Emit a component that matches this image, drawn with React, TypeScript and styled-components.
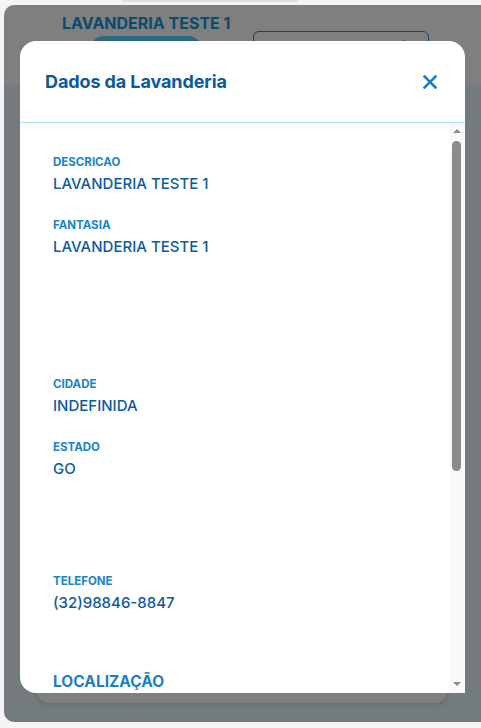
import React, { useEffect, useRef, useState } from "react";
import styled, { createGlobalStyle } from "styled-components";

const GlobalStyle = createGlobalStyle`
  html, body { margin: 0; padding: 0; }
  body {
    background: #f4f4f4;
    font-family: Inter, "Noto Sans", Arial, sans-serif;
    overflow: hidden;
  }
  * { box-sizing: border-box; }
`;

const Screen = styled.div`
  width: 481px;
  height: 728px;
  padding: 5px 0 0 4px;
  overflow: hidden;
  position: relative;
`;

const TabHint = styled.div`
  position: absolute;
  top: 0;
  left: 122px;
  width: 176px;
  height: 2px;
  border-radius: 0 0 4px 4px;
  background: #dedede;
`;

const Device = styled.div`
  position: relative;
  width: 490px;
  height: 717px;
  border-radius: 10px 0 0 10px;
  background: #e6f6fc;
  overflow: hidden;
  display: flex;
  flex-direction: column;
`;

const TopBar = styled.header`
  height: 80px;
  background: #ffffff;
  padding: 10px 0 0 58px;
  display: flex;
  flex-direction: column;
`;

const ShopName = styled.div`
  font-size: 16px;
  font-weight: 700;
  color: #1696de;
  line-height: 16px;
`;

const Actions = styled.div`
  display: flex;
  align-items: flex-start;
  padding-left: 28px;
  gap: 51px;
`;

const Pill = styled.div`
  margin-top: 5px;
  width: 112px;
  height: 28px;
  border-radius: 14px;
  background: #55d2ff;
`;

const OutlineButton = styled.div`
  width: 176px;
  height: 30px;
  border: 1px solid #1a94dc;
  border-radius: 6px;
  font-size: 13px;
  font-weight: 600;
  color: #1a94dc;
  padding: 6px 0 0 16px;
`;

const Content = styled.main`
  flex: 1;
  padding: 16px 0 19px 33px;
  display: flex;
`;

const InfoCard = styled.div`
  width: 410px;
  height: 100%;
  background: #ffffff;
  border-radius: 12px;
  box-shadow: 0 2px 6px rgba(0, 0, 0, 0.12);
`;

const Overlay = styled.div`
  position: absolute;
  inset: 0;
  background: rgba(0, 0, 0, 0.5);
  padding: 36px 0 0 16px;
`;

const Modal = styled.section`
  width: 445px;
  height: 652px;
  background: #ffffff;
  border-radius: 16px;
  display: flex;
  flex-direction: column;
`;

const ModalHeader = styled.div`
  height: 82px;
  flex-shrink: 0;
  display: flex;
  align-items: center;
  justify-content: space-between;
  padding: 0 27px 0 25px;
  border-bottom: 1px solid #ade5f6;
`;

const ModalTitle = styled.h2`
  margin: 0;
  font-size: 18px;
  font-weight: 700;
  color: #0b5a9c;
  letter-spacing: -0.1px;
`;

const CloseButton = styled.button`
  border: 0;
  background: transparent;
  padding: 0;
  width: 16px;
  height: 16px;
  display: flex;
  align-items: center;
  justify-content: center;
  color: #1780c8;
  cursor: pointer;
`;

const BodyWrap = styled.div`
  flex: 1;
  min-height: 0;
  display: flex;
`;

const ScrollArea = styled.div`
  flex: 1;
  overflow-y: auto;
  scrollbar-width: none;
  border-bottom-left-radius: 16px;
  padding: 32px 0 0 33px;
  &::-webkit-scrollbar { display: none; }
`;

const ScrollBar = styled.div`
  width: 15px;
  flex-shrink: 0;
  background: #f9f9f9;
  display: flex;
  flex-direction: column;
`;

const ArrowButton = styled.div<{ $dir: "up" | "down" }>`
  height: 16px;
  flex-shrink: 0;
  display: flex;
  align-items: center;
  justify-content: center;
  padding-right: 1px;
  &::before {
    content: "";
    width: 0;
    height: 0;
    border-left: 4px solid transparent;
    border-right: 4px solid transparent;
    ${(p) =>
      p.$dir === "up"
        ? "border-bottom: 4px solid #8b8b8b; margin-top: 0px;"
        : "border-top: 4px solid #8b8b8b; margin-top: -2px;"}
  }
`;

const Track = styled.div`
  flex: 1;
  position: relative;
  padding: 2px 4px 0 2px;
`;

const Thumb = styled.div`
  width: 9px;
  border-radius: 5px;
  background: #8b8b8b;
`;

const Group = styled.div<{ $after: number }>`
  display: flex;
  flex-direction: column;
  gap: 24px;
  margin-bottom: ${(p) => p.$after}px;
`;

const Field = styled.div`
  display: flex;
  flex-direction: column;
  gap: 5px;
`;

const Label = styled.span`
  font-size: 11.5px;
  line-height: 14px;
  font-weight: 700;
  color: #1a84c9;
`;

const Value = styled.span`
  font-size: 15px;
  line-height: 20px;
  font-weight: 500;
  color: #0e5a9c;
`;

const SectionTitle = styled.h3`
  margin: 0;
  font-size: 15.5px;
  line-height: 20px;
  font-weight: 700;
  color: #1a7fc6;
`;

const MapBox = styled.div`
  margin: 14px 33px 0 0;
  height: 220px;
  border-radius: 10px;
  background: #e6f6fc;
`;

const BottomSpace = styled.div`
  height: 124px;
`;

const groups: { after: number; fields: [string, string][] }[] = [
  { after: 120, fields: [["DESCRICAO", "LAVANDERIA TESTE 1"], ["FANTASIA", "LAVANDERIA TESTE 1"]] },
  { after: 95, fields: [["CIDADE", "INDEFINIDA"], ["ESTADO", "GO"]] },
  { after: 59, fields: [["TELEFONE", "(32)98846-8847"]] },
];

export default function App() {
  const areaRef = useRef<HTMLDivElement>(null);
  const trackRef = useRef<HTMLDivElement>(null);
  const [thumb, setThumb] = useState({ h: 330, top: 0 });

  const update = () => {
    const a = areaRef.current;
    const t = trackRef.current;
    if (!a || !t) return;
    const trackH = t.clientHeight - 2;
    const h = Math.max(20, Math.round((trackH * a.clientHeight) / a.scrollHeight));
    const max = a.scrollHeight - a.clientHeight;
    const top = max > 0 ? Math.round(((trackH - h) * a.scrollTop) / max) : 0;
    setThumb({ h, top });
  };

  useEffect(() => {
    update();
  }, []);

  return (
    <>
      <GlobalStyle />
      <Screen>
        <TabHint />
        <Device>
          <TopBar>
            <ShopName>LAVANDERIA TESTE 1</ShopName>
            <Actions>
              <Pill />
              <OutlineButton>Detalhes da lavanderia</OutlineButton>
            </Actions>
          </TopBar>
          <Content>
            <InfoCard />
          </Content>
          <Overlay>
            <Modal>
              <ModalHeader>
                <ModalTitle>Dados da Lavanderia</ModalTitle>
                <CloseButton aria-label="Fechar">
                  <svg width="14" height="14" viewBox="0 0 14 14">
                    <path d="M1.5 1.5 L12.5 12.5 M12.5 1.5 L1.5 12.5" stroke="currentColor" strokeWidth="2.6" strokeLinecap="square" />
                  </svg>
                </CloseButton>
              </ModalHeader>
              <BodyWrap>
                <ScrollArea ref={areaRef} onScroll={update}>
                  {groups.map((g, i) => (
                    <Group key={i} $after={g.after}>
                      {g.fields.map(([l, v]) => (
                        <Field key={l}>
                          <Label>{l}</Label>
                          <Value>{v}</Value>
                        </Field>
                      ))}
                    </Group>
                  ))}
                  <SectionTitle>LOCALIZAÇÃO</SectionTitle>
                  <MapBox />
                  <BottomSpace />
                </ScrollArea>
                <ScrollBar aria-hidden="true">
                  <ArrowButton $dir="up" />
                  <Track ref={trackRef}>
                    <Thumb style={{ height: thumb.h, marginTop: thumb.top }} />
                  </Track>
                  <ArrowButton $dir="down" />
                </ScrollBar>
              </BodyWrap>
            </Modal>
          </Overlay>
        </Device>
      </Screen>
    </>
  );
}
